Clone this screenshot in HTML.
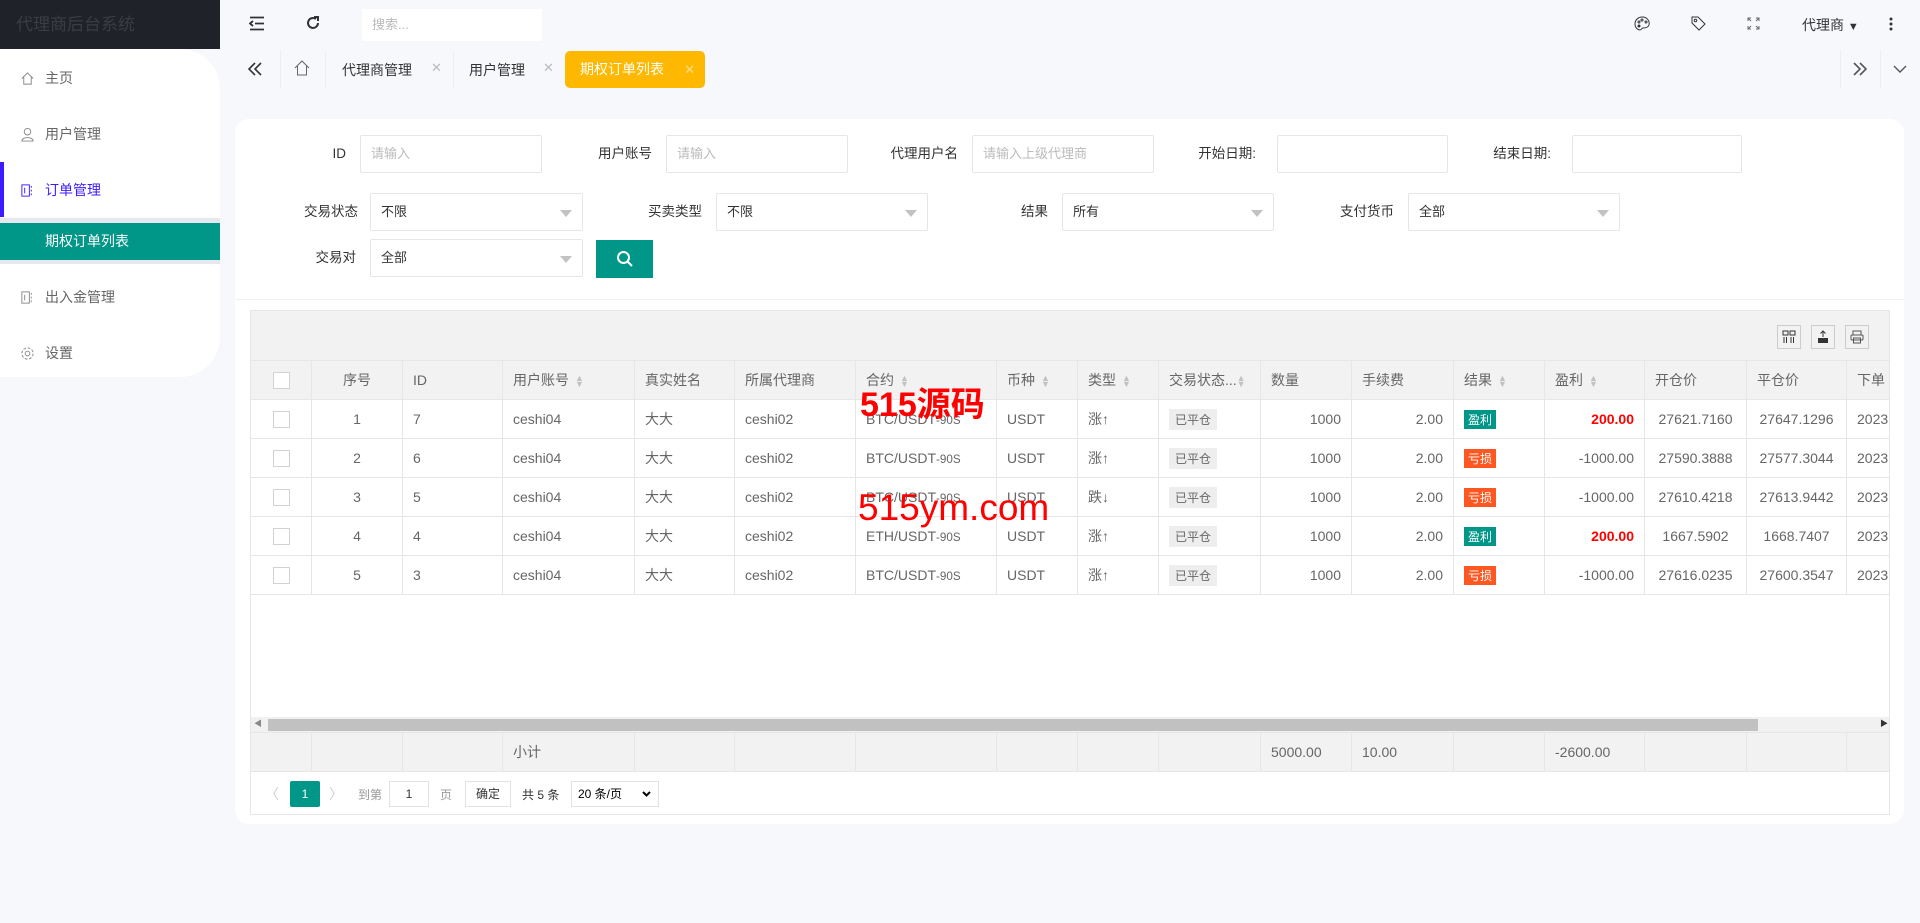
<!DOCTYPE html>
<html><head><meta charset="utf-8"><style>
*{box-sizing:border-box;margin:0;padding:0}
body{width:1920px;height:923px;background:#f7f8fc;font-family:"Liberation Sans","Noto Sans CJK SC",sans-serif;font-size:14px;color:#555;position:relative;overflow:hidden}
.abs{position:absolute}
.logo{left:0;top:0;width:220px;height:49px;background:#20222a;color:#3a3d44;font-size:17px;line-height:49px;padding-left:16px}
.side{left:0;top:49px;width:220px;height:328px;background:#fff;border-radius:0 40px 40px 0}
.mi{position:absolute;left:20px;font-size:14px;color:#666;display:flex;align-items:center}
.mi svg{margin-right:10px}
.inp{position:absolute;height:38px;background:#fff;border:1px solid #e6e6e6;border-radius:2px;color:#bbb;font-size:13px;line-height:36px;padding-left:10px}
.sel{color:#333}
.sel:after{content:"";position:absolute;right:10px;top:16px;border:6px solid transparent;border-top:7px solid #c2c2c2}
.lbl{position:absolute;font-size:13.5px;color:#333;text-align:right;line-height:38px}
table{border-collapse:collapse;table-layout:fixed}
td,th{border:1px solid #e6e6e6;height:39px;font-weight:normal;font-size:14px;color:#666;padding:0 10px;white-space:nowrap;overflow:hidden;text-align:left}
th{background:#f2f2f2;color:#666}
.cb{display:inline-block;width:17px;height:17px;border:1px solid #d2d2d2;background:#fff;vertical-align:middle}
.srt{display:inline-block;margin-left:6px;color:#c2c2c2;font-size:9px;line-height:6px;vertical-align:middle}
.tg{display:inline-block;background:#eee;color:#666;font-size:12px;padding:2px 6px}
.g{display:inline-block;background:#009688;color:#fff;font-size:12px;padding:1px 4px}
.o{display:inline-block;background:#ff5722;color:#fff;font-size:12px;padding:1px 4px}
.r{text-align:right}.c{text-align:center}
.red{color:#f00;font-weight:bold}
.tb{position:absolute;width:24px;height:24px;border:1px solid #ccc;top:14px;display:flex;align-items:center;justify-content:center}
</style></head><body>
<div class="abs logo">代理商后台系统</div>
<div class="abs side"></div>
<div class="mi" style="top:68px"><svg width="15" height="15" viewBox="0 0 16 16" fill="none" stroke="#888"><path d="M2 8 L8 2 L14 8 M4 6.5 V14 H12 V6.5"/></svg>主页</div>
<div class="mi" style="top:124px"><svg width="15" height="15" viewBox="0 0 16 16" fill="none" stroke="#888"><circle cx="8" cy="5" r="3.5"/><path d="M2 15 C2 10 14 10 14 15 Z"/></svg>用户管理</div>
<div class="abs" style="left:0;top:162px;width:4px;height:55px;background:#3c1cff"></div>
<div class="mi" style="top:180px;color:#3c1cff"><svg width="15" height="15" viewBox="0 0 16 16" fill="none" stroke="#3c1cff"><rect x="2" y="2" width="8" height="12"/><path d="M5 5v6M12 3v2M12 7v2M12 11v2"/></svg>订单管理</div>
<div class="abs" style="left:0;top:218px;width:220px;height:46px;background:#e6e8ee"></div>
<div class="abs" style="left:0;top:223px;width:220px;height:37px;background:#009688;color:#fff;line-height:37px;padding-left:45px;font-size:14px">期权订单列表</div>
<div class="mi" style="top:287px"><svg width="15" height="15" viewBox="0 0 16 16" fill="none" stroke="#888"><rect x="2" y="2" width="8" height="12"/><path d="M5 5v6M12 3v2M12 7v2M12 11v2"/></svg>出入金管理</div>
<div class="mi" style="top:343px"><svg width="15" height="15" viewBox="0 0 16 16" fill="none" stroke="#888"><circle cx="8" cy="8" r="2.5"/><circle cx="8" cy="8" r="6" stroke-dasharray="3 1.7"/></svg>设置</div>

<!-- top bar -->
<svg class="abs" style="left:249px;top:16px" width="16" height="15" viewBox="0 0 16 15" fill="none" stroke="#333" stroke-width="1.8"><path d="M1 1.5H15M6 7.5H15M1 13.5H15M4 5L1 7.5L4 10"/></svg>
<svg class="abs" style="left:305px;top:15px" width="16" height="16" viewBox="0 0 16 16" fill="none" stroke="#333" stroke-width="2"><path d="M13 8A5 5 0 1 1 11 4"/><path d="M9 2H13V6" fill="none"/></svg>
<div class="abs" style="left:362px;top:9px;width:180px;height:32px;background:#fff;color:#bbb;font-size:13px;line-height:32px;padding-left:10px">搜索...</div>
<svg class="abs" style="left:1634px;top:16px" width="17" height="15" viewBox="0 0 17 15" fill="none" stroke="#333"><path d="M8.5 1C3 1 1 5 1 8c0 4 3 6 5 6 1.5 0 1.5-2 3-2s5 0 6-3c1-4-2-8-6.5-8z"/><circle cx="5" cy="6" r="1"/><circle cx="8" cy="4" r="1"/><circle cx="12" cy="6" r="1"/><circle cx="5" cy="10" r="1" fill="#333"/></svg>
<svg class="abs" style="left:1690px;top:15px" width="17" height="17" viewBox="0 0 17 17" fill="none" stroke="#333"><path d="M2 2H8L15 9L9 15L2 8Z"/><circle cx="5.5" cy="5.5" r="1.3"/></svg>
<svg class="abs" style="left:1747px;top:17px" width="13" height="13" viewBox="0 0 13 13" fill="none" stroke="#666"><path d="M1 4V1H4M9 1H12V4M12 9V12H9M4 12H1V9M1 1L4 4M12 1L9 4M12 12L9 9M1 12L4 9"/></svg>
<div class="abs" style="left:1802px;top:15px;font-size:14px;color:#333">代理商 <span style="font-size:11px">▼</span></div>
<svg class="abs" style="left:1889px;top:17px" width="4" height="14"><circle cx="2" cy="2" r="1.5" fill="#333"/><circle cx="2" cy="7" r="1.5" fill="#333"/><circle cx="2" cy="12" r="1.5" fill="#333"/></svg>

<!-- tabs -->
<svg class="abs" style="left:248px;top:62px" width="14" height="14" viewBox="0 0 14 14" fill="none" stroke="#333" stroke-width="1.6"><path d="M7 1L1 7L7 13M13 1L7 7L13 13"/></svg>
<div class="abs" style="left:280px;top:50px;width:1px;height:38px;background:#eceef2"></div>
<svg class="abs" style="left:294px;top:60px" width="16" height="16" viewBox="0 0 16 16" fill="none" stroke="#666"><path d="M1 8L8 1L15 8M3.5 6V15H12.5V6"/></svg>
<div class="abs" style="left:325px;top:50px;width:1px;height:38px;background:#eceef2"></div>
<div class="abs" style="left:342px;top:60px;color:#333;font-size:14px">代理商管理</div>
<div class="abs" style="left:431px;top:60px;color:#bbb;font-size:13px">✕</div>
<div class="abs" style="left:453px;top:50px;width:1px;height:38px;background:#eceef2"></div>
<div class="abs" style="left:469px;top:60px;color:#333;font-size:14px">用户管理</div>
<div class="abs" style="left:543px;top:60px;color:#bbb;font-size:13px">✕</div>
<div class="abs" style="left:565px;top:51px;width:140px;height:37px;background:#ffb800;border-radius:5px;color:#fff;line-height:37px;padding-left:15px;font-size:14px">期权订单列表<span style="position:absolute;right:10px;color:#ffe08a;font-size:13px">✕</span></div>
<div class="abs" style="left:1840px;top:50px;width:1px;height:38px;background:#eceef2"></div>
<svg class="abs" style="left:1853px;top:62px" width="14" height="14" viewBox="0 0 14 14" fill="none" stroke="#555" stroke-width="1.6"><path d="M1 1L7 7L1 13M7 1L13 7L7 13"/></svg>
<div class="abs" style="left:1880px;top:50px;width:1px;height:38px;background:#eceef2"></div>
<svg class="abs" style="left:1893px;top:65px" width="14" height="8" viewBox="0 0 14 8" fill="none" stroke="#555" stroke-width="1.4"><path d="M1 1L7 7L13 1"/></svg>

<!-- card -->
<div class="abs" style="left:235px;top:119px;width:1669px;height:705px;background:#fff;border-radius:14px"></div>
<div class="lbl" style="left:300px;top:135px;width:46px">ID</div>
<div class="inp" style="left:360px;top:135px;width:182px">请输入</div>
<div class="lbl" style="left:580px;top:135px;width:72px">用户账号</div>
<div class="inp" style="left:666px;top:135px;width:182px">请输入</div>
<div class="lbl" style="left:870px;top:135px;width:88px">代理用户名</div>
<div class="inp" style="left:972px;top:135px;width:182px">请输入上级代理商</div>
<div class="lbl" style="left:1180px;top:135px;width:76px">开始日期:</div>
<div class="inp" style="left:1277px;top:135px;width:171px"></div>
<div class="lbl" style="left:1475px;top:135px;width:76px">结束日期:</div>
<div class="inp" style="left:1572px;top:135px;width:170px"></div>

<div class="lbl" style="left:280px;top:193px;width:78px">交易状态</div>
<div class="inp sel" style="left:370px;top:193px;width:213px">不限</div>
<div class="lbl" style="left:620px;top:193px;width:82px">买卖类型</div>
<div class="inp sel" style="left:716px;top:193px;width:212px">不限</div>
<div class="lbl" style="left:980px;top:193px;width:68px">结果</div>
<div class="inp sel" style="left:1062px;top:193px;width:212px">所有</div>
<div class="lbl" style="left:1300px;top:193px;width:94px">支付货币</div>
<div class="inp sel" style="left:1408px;top:193px;width:212px">全部</div>
<div class="lbl" style="left:290px;top:239px;width:66px">交易对</div>
<div class="inp sel" style="left:370px;top:239px;width:213px">全部</div>
<div class="abs" style="left:596px;top:240px;width:57px;height:38px;background:#009688;display:flex;align-items:center;justify-content:center"><svg width="18" height="18" viewBox="0 0 18 18" fill="none" stroke="#fff" stroke-width="2"><circle cx="7.5" cy="7.5" r="5.5"/><path d="M11.5 11.5L16 16"/></svg></div>
<div class="abs" style="left:235px;top:299px;width:1669px;height:1px;background:#f0f0f0"></div>

<!-- table box -->
<div class="abs" style="left:250px;top:310px;width:1640px;height:505px;border:1px solid #e6e6e6;overflow:hidden;background:#fff">
 <div style="height:50px;background:#f2f2f2;border-bottom:1px solid #e6e6e6;position:relative">
  <div class="tb" style="left:1526px"><svg width="14" height="14" viewBox="0 0 14 14" fill="none" stroke="#333"><rect x="1" y="1" width="5" height="4"/><rect x="8" y="1" width="5" height="4"/><path d="M2 7v6M4.5 7v6M9 7v6M11.5 7v6"/></svg></div>
  <div class="tb" style="left:1560px"><svg width="14" height="14" viewBox="0 0 14 14"><path d="M2 8h10v5H2z" fill="#333"/><path d="M7 1v6M4.5 3.5L7 1l2.5 2.5" fill="none" stroke="#333"/></svg></div>
  <div class="tb" style="left:1594px"><svg width="14" height="14" viewBox="0 0 14 14" fill="none" stroke="#555"><rect x="3" y="1" width="8" height="4"/><rect x="1" y="5" width="12" height="5" rx="1"/><rect x="3.5" y="8" width="7" height="5"/></svg></div>
 </div>
 <table style="width:1756px;margin-left:-1px;margin-top:-1px">
 <colgroup><col style="width:61px"><col style="width:91px"><col style="width:100px"><col style="width:132px"><col style="width:100px"><col style="width:121px"><col style="width:141px"><col style="width:81px"><col style="width:81px"><col style="width:102px"><col style="width:91px"><col style="width:102px"><col style="width:91px"><col style="width:100px"><col style="width:102px"><col style="width:100px"><col style="width:160px"></colgroup>
 <tr><th class="c"><span class="cb"></span></th><th class="c">序号</th><th>ID</th><th>用户账号<span class="srt">▲<br>▼</span></th><th>真实姓名</th><th>所属代理商</th><th>合约<span class="srt">▲<br>▼</span></th><th>币种<span class="srt">▲<br>▼</span></th><th>类型<span class="srt">▲<br>▼</span></th><th>交易状态...<span class="srt" style="margin-left:0">▲<br>▼</span></th><th>数量</th><th>手续费</th><th>结果<span class="srt">▲<br>▼</span></th><th>盈利<span class="srt">▲<br>▼</span></th><th>开仓价</th><th>平仓价</th><th>下单</th></tr>
 <tr><td class="c"><span class="cb"></span></td><td class="c">1</td><td>7</td><td>ceshi04</td><td>大大</td><td>ceshi02</td><td>BTC/USDT<small>-90S</small></td><td>USDT</td><td>涨↑</td><td><span class="tg">已平仓</span></td><td class="r">1000</td><td class="r">2.00</td><td><span class="g">盈利</span></td><td class="r red">200.00</td><td class="c">27621.7160</td><td class="c">27647.1296</td><td>2023</td></tr>
 <tr><td class="c"><span class="cb"></span></td><td class="c">2</td><td>6</td><td>ceshi04</td><td>大大</td><td>ceshi02</td><td>BTC/USDT<small>-90S</small></td><td>USDT</td><td>涨↑</td><td><span class="tg">已平仓</span></td><td class="r">1000</td><td class="r">2.00</td><td><span class="o">亏损</span></td><td class="r">-1000.00</td><td class="c">27590.3888</td><td class="c">27577.3044</td><td>2023</td></tr>
 <tr><td class="c"><span class="cb"></span></td><td class="c">3</td><td>5</td><td>ceshi04</td><td>大大</td><td>ceshi02</td><td>BTC/USDT<small>-90S</small></td><td>USDT</td><td>跌↓</td><td><span class="tg">已平仓</span></td><td class="r">1000</td><td class="r">2.00</td><td><span class="o">亏损</span></td><td class="r">-1000.00</td><td class="c">27610.4218</td><td class="c">27613.9442</td><td>2023</td></tr>
 <tr><td class="c"><span class="cb"></span></td><td class="c">4</td><td>4</td><td>ceshi04</td><td>大大</td><td>ceshi02</td><td>ETH/USDT<small>-90S</small></td><td>USDT</td><td>涨↑</td><td><span class="tg">已平仓</span></td><td class="r">1000</td><td class="r">2.00</td><td><span class="g">盈利</span></td><td class="r red">200.00</td><td class="c">1667.5902</td><td class="c">1668.7407</td><td>2023</td></tr>
 <tr><td class="c"><span class="cb"></span></td><td class="c">5</td><td>3</td><td>ceshi04</td><td>大大</td><td>ceshi02</td><td>BTC/USDT<small>-90S</small></td><td>USDT</td><td>涨↑</td><td><span class="tg">已平仓</span></td><td class="r">1000</td><td class="r">2.00</td><td><span class="o">亏损</span></td><td class="r">-1000.00</td><td class="c">27616.0235</td><td class="c">27600.3547</td><td>2023</td></tr>
 </table>
 <div style="position:absolute;left:0;top:406px;width:1640px;height:16px;background:#f1f1f1"><div style="position:absolute;left:17px;top:2px;width:1490px;height:12px;background:#c1c1c1"></div><span style="position:absolute;left:3px;top:1px;font-size:8px;color:#888">◀</span><span style="position:absolute;right:3px;top:1px;font-size:8px;color:#333">▶</span></div>
 <table style="position:absolute;left:-1px;top:421px;width:1756px">
 <colgroup><col style="width:61px"><col style="width:91px"><col style="width:100px"><col style="width:132px"><col style="width:100px"><col style="width:121px"><col style="width:141px"><col style="width:81px"><col style="width:81px"><col style="width:102px"><col style="width:91px"><col style="width:102px"><col style="width:91px"><col style="width:100px"><col style="width:102px"><col style="width:100px"><col style="width:160px"></colgroup>
 <tr><th></th><th></th><th></th><th>小计</th><th></th><th></th><th></th><th></th><th></th><th></th><th>5000.00</th><th>10.00</th><th></th><th>-2600.00</th><th></th><th></th><th></th></tr>
 </table>
 <div style="position:absolute;left:0;top:461px;height:43px;width:100%;font-size:12px;color:#999">
  <span class="abs" style="left:14px;top:12px;color:#ccc;font-size:14px">〈</span>
  <span class="abs" style="left:39px;top:9px;width:30px;height:26px;background:#009688;color:#fff;text-align:center;line-height:26px;border-radius:2px">1</span>
  <span class="abs" style="left:78px;top:12px;color:#ccc;font-size:14px">〉</span>
  <span class="abs" style="left:107px;top:14px">到第</span>
  <span class="abs" style="left:138px;top:9px;width:40px;height:26px;border:1px solid #e2e2e2;text-align:center;line-height:24px;color:#333">1</span>
  <span class="abs" style="left:189px;top:14px">页</span>
  <span class="abs" style="left:214px;top:9px;width:46px;height:26px;border:1px solid #e2e2e2;text-align:center;line-height:24px;color:#333">确定</span>
  <span class="abs" style="left:271px;top:14px;color:#333">共 5 条</span>
  <span class="abs" style="left:320px;top:9px;width:88px;height:26px;border:1px solid #e2e2e2;line-height:24px;padding-left:6px;color:#000">20 条/页</span>
  <svg class="abs" style="left:391px;top:19px" width="9" height="6" viewBox="0 0 9 6" fill="none" stroke="#000" stroke-width="2"><path d="M1 1L4.5 4.5L8 1"/></svg>
 </div>
</div>
<div class="abs" style="left:860px;top:385px;color:#f00;font-size:34px;line-height:40px;font-weight:bold">515源码</div>
<div class="abs" style="left:858px;top:486px;color:#f00;font-size:37px;line-height:44px">515ym.com</div>
</body></html>
